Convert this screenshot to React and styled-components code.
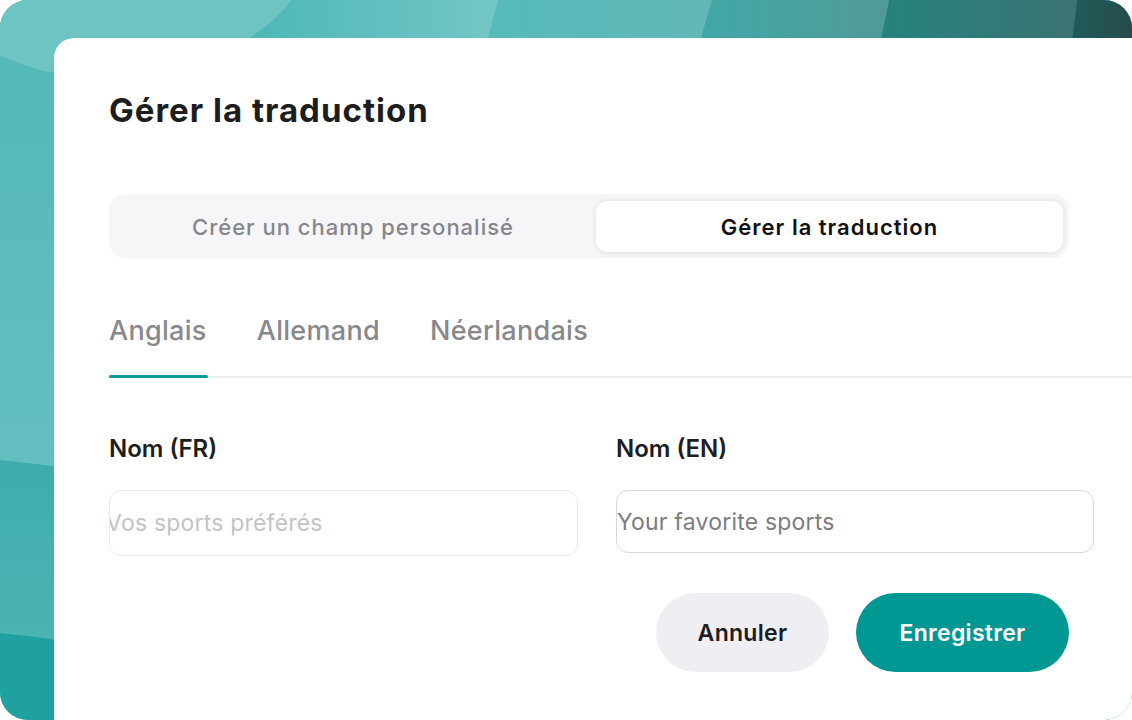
import React from "react";
import styled, { createGlobalStyle } from "styled-components";

const GlobalStyle = createGlobalStyle`
  * { box-sizing: border-box; }
  html, body { margin: 0; padding: 0; background: #ffffff; }
  body { font-family: Inter, "Noto Sans", "Liberation Sans", sans-serif; }
`;

const Frame = styled.div`
  position: relative;
  width: 1132px;
  height: 720px;
  padding: 38px 0 0 54px;
  border-radius: 28px;
  overflow: hidden;
  background: #55b9b8;
`;

const Backdrop = styled.svg`
  position: absolute;
  inset: 0;
  width: 100%;
  height: 100%;
`;

const Panel = styled.section`
  position: relative;
  height: 100%;
  padding: 53px 0 0 55px;
  background: #ffffff;
  border-top-left-radius: 20px;
  display: flex;
  flex-direction: column;
`;

const Title = styled.h1`
  margin: 0;
  font-size: 33px;
  line-height: 38px;
  font-weight: 700;
  color: #1d1d1f;
  letter-spacing: 1px;
`;

const Segmented = styled.div`
  margin-top: 65px;
  width: 960px;
  height: 64px;
  padding: 7px 6px 6px 7px;
  border-radius: 16px;
  background: #f6f6f8;
  display: grid;
  grid-template-columns: 1fr 467px;
  column-gap: 6px;
`;

const Segment = styled.button`
  border: 0;
  border-radius: 12px;
  font-family: inherit;
  font-size: 22px;
  letter-spacing: 1px;
  font-weight: ${(p) => (p.$active ? 600 : 500)};
  color: ${(p) => (p.$active ? "#111113" : "#85858a")};
  background: ${(p) => (p.$active ? "#ffffff" : "transparent")};
  box-shadow: ${(p) =>
    p.$active ? "0 0 0 3px rgba(235, 235, 238, 0.7), 0 2px 6px rgba(0,0,0,0.03)" : "none"};
  cursor: pointer;
`;

const TabBar = styled.div`
  margin-top: 56px;
  display: flex;
  gap: 50px;
  border-bottom: 2px solid #efeff2;
`;

const Tab = styled.div`
  position: relative;
  padding-bottom: 29px;
  font-size: 27px;
  line-height: 33px;
  letter-spacing: 0.3px;
  font-weight: 500;
  color: #88888c;
  cursor: pointer;

  &::after {
    content: "";
    display: ${(p) => (p.$active ? "block" : "none")};
    position: absolute;
    left: 0;
    right: -1px;
    bottom: -2px;
    height: 3px;
    border-radius: 2px;
    background: #0e9b98;
  }
`;

const Fields = styled.div`
  margin-top: 56px;
  display: grid;
  grid-template-columns: 469px 478px;
  column-gap: 38px;
`;

const Field = styled.label`
  display: flex;
  flex-direction: column;
  gap: 27px;
`;

const Label = styled.span`
  font-size: 24px;
  line-height: 29px;
  font-weight: 600;
  color: #1d1d1f;
`;

const Input = styled.input`
  height: ${(p) => p.$h}px;
  padding: 0 0 0 ${(p) => p.$pad}px;
  border: 1.5px solid ${(p) => p.$border};
  border-radius: 12px;
  background: #ffffff;
  font-family: inherit;
  font-size: 23px;
  letter-spacing: 0.2px;
  color: #1d1d1f;
  outline: none;

  &::placeholder {
    color: ${(p) => p.$hint};
    opacity: 1;
  }
`;

const Actions = styled.div`
  margin-top: 37px;
  width: 960px;
  display: flex;
  justify-content: flex-end;
  gap: 27px;
`;

const Button = styled.button`
  height: 79px;
  width: ${(p) => p.$w}px;
  border: 0;
  border-radius: 40px;
  font-family: inherit;
  font-size: 23px;
  letter-spacing: 0.3px;
  font-weight: 600;
  color: ${(p) => (p.$primary ? "#ffffff" : "#1d1d1f")};
  background: ${(p) => (p.$primary ? "#019894" : "#efeff3")};
  cursor: pointer;
`;

const Waves = () => (
  <Backdrop viewBox="0 0 1132 720" preserveAspectRatio="none" aria-hidden="true">
    <defs>
      <linearGradient id="gLeft" x1="0" y1="0" x2="0" y2="1">
        <stop offset="0" stopColor="#52b7b6" />
        <stop offset="1" stopColor="#6dc4c4" />
      </linearGradient>
      <linearGradient id="gMid" x1="0" y1="0" x2="0" y2="1">
        <stop offset="0" stopColor="#3eacab" />
        <stop offset="1" stopColor="#4cb4b3" />
      </linearGradient>
      <linearGradient id="b1" x1="0" y1="0" x2="1" y2="0">
        <stop offset="0" stopColor="#4db8b7" />
        <stop offset="1" stopColor="#74c6c6" />
      </linearGradient>
      <linearGradient id="b2" x1="0" y1="0" x2="1" y2="0">
        <stop offset="0" stopColor="#55bbba" />
        <stop offset="1" stopColor="#63b7b7" />
      </linearGradient>
      <linearGradient id="b3" x1="0" y1="0" x2="1" y2="0">
        <stop offset="0" stopColor="#40a8a6" />
        <stop offset="1" stopColor="#519a98" />
      </linearGradient>
      <linearGradient id="b4" x1="0" y1="0" x2="1" y2="0">
        <stop offset="0" stopColor="#26837f" />
        <stop offset="1" stopColor="#3b7272" />
      </linearGradient>
      <linearGradient id="b5" x1="0" y1="0" x2="1" y2="0">
        <stop offset="0" stopColor="#1f5b59" />
        <stop offset="1" stopColor="#264c4c" />
      </linearGradient>
    </defs>
    <rect width="1132" height="720" fill="url(#gLeft)" />
    <path d="M0 460 Q 30 463 60 467 L60 640 Q 30 636 0 633 Z" fill="url(#gMid)" />
    <path d="M0 633 Q 30 636 60 640 L60 720 L0 720 Z" fill="#1fa19f" />
    <path d="M250 0 L500 0 L488 38 L250 38 Z" fill="url(#b1)" />
    <path d="M498 0 L712 0 L701 38 L488 38 Z" fill="url(#b2)" />
    <path d="M712 0 L889 0 L881 38 L701 38 Z" fill="url(#b3)" />
    <path d="M889 0 L1077 0 L1072 38 L881 38 Z" fill="url(#b4)" />
    <path d="M1077 0 L1132 0 L1132 38 L1072 38 Z" fill="url(#b5)" />
    <path d="M0 0 L292 0 Q 240 65 120 78 Q 50 80 0 55 Z" fill="#6ec3c3" />
  </Backdrop>
);

export default function App() {
  return (
    <>
      <GlobalStyle />
      <Frame>
        <Waves />
        <Panel>
          <Title>Gérer la traduction</Title>
          <Segmented>
            <Segment>Créer un champ personalisé</Segment>
            <Segment $active>Gérer la traduction</Segment>
          </Segmented>
          <TabBar>
            <Tab $active>Anglais</Tab>
            <Tab>Allemand</Tab>
            <Tab>Néerlandais</Tab>
          </TabBar>
          <Fields>
            <Field>
              <Label>Nom (FR)</Label>
              <Input
                readOnly
                $h={66}
                $pad={0}
                $border="#eaeaed"
                $hint="#c3c3c7"
                style={{ textIndent: "-4px" }}
                placeholder="Vos sports préférés"
              />
            </Field>
            <Field>
              <Label>Nom (EN)</Label>
              <Input
                readOnly
                $h={63}
                $pad={0}
                $border="#d7d7db"
                $hint="#7c7c80"
                placeholder="Your favorite sports"
              />
            </Field>
          </Fields>
          <Actions>
            <Button $w={173}>Annuler</Button>
            <Button $w={213} $primary>Enregistrer</Button>
          </Actions>
        </Panel>
      </Frame>
    </>
  );
}
